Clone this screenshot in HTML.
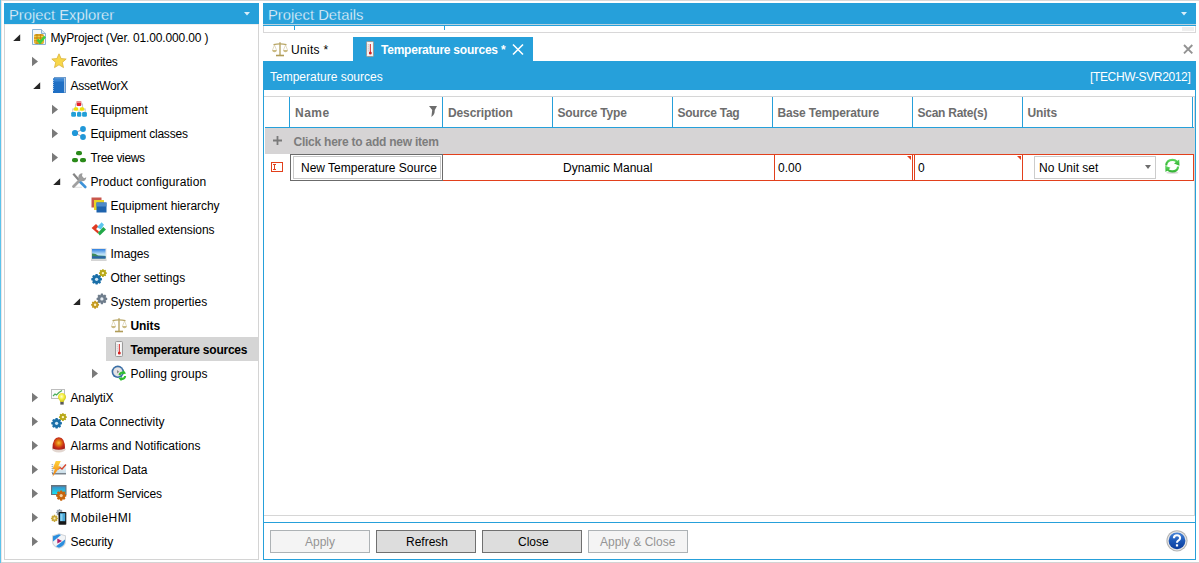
<!DOCTYPE html>
<html><head><meta charset="utf-8">
<style>
*{margin:0;padding:0;box-sizing:border-box}
html,body{width:1199px;height:563px;overflow:hidden;background:#fff}
body{position:relative;font-family:"Liberation Sans",sans-serif;font-size:12px;color:#000}
.a{position:absolute}
.t{position:absolute;white-space:nowrap;line-height:14px;height:14px}
.b{font-weight:bold}
.blue{background:#26a0da}
.hl{position:absolute;height:1px}
.vl{position:absolute;width:1px}
svg{position:absolute;overflow:visible}
</style></head><body>
<!-- outer frame -->
<div class="hl" style="left:1px;top:0;width:1198px;background:#d9d9d9"></div>
<div class="vl" style="left:0;top:0;height:563px;background:#5bc3ec"></div>
<div class="vl" style="left:1px;top:1px;height:562px;background:#ece6e6"></div>
<div class="hl" style="left:1px;top:562px;width:1198px;background:#d4d4d4"></div>

<!-- LEFT PANEL -->
<div class="a blue" style="left:4px;top:3px;width:255px;height:21px"></div>
<div class="t" style="left:9px;top:6.5px;font-size:14.8px;line-height:17px;height:17px;color:#fff;-webkit-text-stroke:0.35px #26a0da">Project Explorer</div>
<svg style="left:0;top:0" width="1" height="1"><path d="M244 12 L250 12 L247 15.5 Z" fill="#d8eef9"/></svg>
<div class="hl" style="left:4px;top:24px;width:255px;background:#efefef"></div>
<div class="vl" style="left:4px;top:24px;height:536px;background:#d4d4d4"></div>
<div class="vl" style="left:258px;top:24px;height:536px;background:#d4d4d4"></div>
<div class="hl" style="left:4px;top:559px;width:255px;background:#d4d4d4"></div>

<!-- selected row -->
<div class="a" style="left:106px;top:337px;width:152px;height:24px;background:#d5d5d5"></div>

<div id="tree"><svg style="left:0;top:0" width="1" height="1"><path d="M20.2 34.3 L20.2 41 L13.2 41 Z" fill="#262626"/></svg>
<svg style="left:31px;top:29px" width="16" height="16" viewBox="0 0 16 16"><path d="M1.5 0.5 H10.5 L14.5 4.5 V15.5 H1.5 Z" fill="#f3f7fb" stroke="#8db4d4"/><path d="M10.5 0.5 V4.5 H14.5" fill="#dce9f4" stroke="#8db4d4"/>
<rect x="3" y="5" width="10" height="10" rx="2" fill="#d9a01e"/><path d="M3 7.5 H13 M3 10.5 H13 M3 13 H13" stroke="#f2c84b" stroke-width="1"/><path d="M6 5 V15 M9.5 5 V15" stroke="#b9800f" stroke-width="0.8"/>
<path d="M6.5 10.5 L9 13.5 L14 7.5" fill="none" stroke="#3fcf3f" stroke-width="2.6"/></svg>
<div class="t" style="left:50.5px;top:31px;letter-spacing:-0.138px">MyProject (Ver. 01.00.000.00 )</div>
<svg style="left:0;top:0" width="1" height="1"><path d="M32 56.8 L38 61.5 L32 66.2 Z" fill="#7a7a7a"/></svg>
<svg style="left:51px;top:53px" width="16" height="16" viewBox="0 0 16 16"><path d="M8 0.8 L10.1 5.6 L15.2 6 L11.3 9.4 L12.5 14.6 L8 11.8 L3.5 14.6 L4.7 9.4 L0.8 6 L5.9 5.6 Z" fill="#f8d74a" stroke="#d9b23a" stroke-width="0.8"/></svg>
<div class="t" style="left:70.5px;top:55px;letter-spacing:-0.250px">Favorites</div>
<svg style="left:0;top:0" width="1" height="1"><path d="M40.2 82.3 L40.2 89 L33.2 89 Z" fill="#262626"/></svg>
<svg style="left:51px;top:77px" width="16" height="16" viewBox="0 0 16 16"><rect x="3.5" y="0.5" width="11" height="15" fill="#a9c7e6" stroke="#6d9bcc"/><rect x="2" y="1.5" width="11" height="14.5" fill="#1f6fc4"/><rect x="2" y="1.5" width="11" height="3" fill="#3a86d4"/><path d="M2 3 V15" stroke="#e8eef5" stroke-width="1.2" stroke-dasharray="1 1"/></svg>
<div class="t" style="left:70.5px;top:79px;letter-spacing:-0.250px">AssetWorX</div>
<svg style="left:0;top:0" width="1" height="1"><path d="M52 104.8 L58 109.5 L52 114.2 Z" fill="#7a7a7a"/></svg>
<svg style="left:71px;top:101px" width="16" height="16" viewBox="0 0 16 16"><path d="M6 3 H4.5 V8 M10 3 H11.5 V8 M3 8 H1.8 V13 M13 8 H14.2 V13 M8 9 V12" stroke="#c8c8c8" stroke-width="1.1" fill="none"/><rect x="5.7" y="0" width="4.5" height="5" rx="0.8" fill="#e8202a"/><rect x="5.7" y="0" width="4.5" height="2" fill="#e88a8a"/><rect x="2.7" y="6.2" width="4.6" height="3.6" rx="1.5" fill="#ece010"/><rect x="8.7" y="6.2" width="4.6" height="3.6" rx="1.5" fill="#ece010"/><rect x="0.2" y="11" width="4.8" height="4.8" rx="1.3" fill="#21a0d8"/><rect x="6" y="11" width="4.3" height="4.8" rx="1.3" fill="#21a0d8"/><rect x="11.1" y="11" width="4.8" height="4.8" rx="1.3" fill="#21a0d8"/></svg>
<div class="t" style="left:90.5px;top:103px">Equipment</div>
<svg style="left:0;top:0" width="1" height="1"><path d="M52 128.8 L58 133.5 L52 138.2 Z" fill="#7a7a7a"/></svg>
<svg style="left:71px;top:125px" width="16" height="16" viewBox="0 0 16 16"><path d="M4 8 L12 4 M4 8 L12 12" stroke="#c9a0a0" stroke-width="1"/><circle cx="4" cy="8" r="3.1" fill="#2097d8"/><circle cx="12" cy="4" r="2.9" fill="#2097d8"/><circle cx="12" cy="12" r="2.9" fill="#2097d8"/></svg>
<div class="t" style="left:90.5px;top:127px;letter-spacing:-0.206px">Equipment classes</div>
<svg style="left:0;top:0" width="1" height="1"><path d="M52 152.8 L58 157.5 L52 162.2 Z" fill="#7a7a7a"/></svg>
<svg style="left:71px;top:149px" width="16" height="16" viewBox="0 0 16 16"><rect x="5" y="2" width="6" height="4.2" rx="2" fill="#2a8a1a"/><rect x="1" y="9" width="6" height="4.2" rx="2" fill="#2a8a1a"/><rect x="9" y="9" width="6" height="4.2" rx="2" fill="#2a8a1a"/></svg>
<div class="t" style="left:90.5px;top:151px;letter-spacing:-0.333px">Tree views</div>
<svg style="left:0;top:0" width="1" height="1"><path d="M60.2 178.3 L60.2 185 L53.2 185 Z" fill="#262626"/></svg>
<svg style="left:71px;top:173px" width="16" height="16" viewBox="0 0 16 16"><path d="M2 14.3 H11" stroke="#e0e0e0" stroke-width="1"/><path d="M2.3 0.8 L8.5 7.8" stroke="#858585" stroke-width="2.2"/><path d="M8.3 8 L14.3 14" stroke="#3c92d8" stroke-width="2.6" stroke-linecap="round"/><path d="M11.5 0.3 A4 4 0 1 0 15.3 4.3 L13 5.2 L11 3 Z" fill="#9c9c9c"/><path d="M10.5 5.5 L2.5 13.5" stroke="#a0a0a0" stroke-width="2.8" stroke-linecap="round"/></svg>
<div class="t" style="left:90.5px;top:175px;letter-spacing:0.110px">Product configuration</div>
<svg style="left:91px;top:197px" width="16" height="16" viewBox="0 0 16 16"><rect x="0.5" y="0.5" width="10" height="10" fill="#c9574c"/><rect x="3" y="3" width="10" height="10" fill="#e8d326"/><rect x="5.5" y="5.5" width="10" height="10" fill="#1e63ad"/><rect x="5.5" y="5.5" width="10" height="4" fill="#4e8ac8"/></svg>
<div class="t" style="left:110.5px;top:199px;letter-spacing:-0.056px">Equipment hierarchy</div>
<svg style="left:91px;top:221px" width="16" height="16" viewBox="0 0 16 16"><path d="M0.6 7 L5 3 L7.5 5.5 L5 8 L8 10.5 L6.8 12.5 Z" fill="#e03a22"/><path d="M6 6.2 L10.6 1.2 L13 3.8 L10 8.5 Z" fill="#5cc6ee"/><path d="M6.8 12 L12.3 6 L15 8.5 L8.8 14.5 Z" fill="#22a848"/></svg>
<div class="t" style="left:110.5px;top:223px;letter-spacing:-0.074px">Installed extensions</div>
<svg style="left:91px;top:245px" width="16" height="16" viewBox="0 0 16 16"><defs><linearGradient id="sky" x1="0" y1="0" x2="0" y2="1"><stop offset="0" stop-color="#2c7ee0"/><stop offset="0.55" stop-color="#bfe2f6"/><stop offset="1" stop-color="#8cc8e8"/></linearGradient></defs><rect x="0" y="3" width="15.5" height="12.8" fill="#e4e4e4"/><rect x="0" y="14.5" width="15.5" height="1.3" fill="#cfcfcf"/><rect x="1" y="4" width="13.5" height="9.5" fill="url(#sky)"/><path d="M1 8.5 Q4 8 7 10.5 L14.5 11 V13.5 H1 Z" fill="#3e8a5a"/><rect x="1" y="11.3" width="13.5" height="2.2" fill="#2a64a8"/></svg>
<div class="t" style="left:110.5px;top:247px;letter-spacing:-0.100px">Images</div>
<svg style="left:91px;top:269px" width="16" height="16" viewBox="0 0 16 16"><polygon points="9.29,8.77 10.92,9.37 10.92,11.23 9.29,11.83 9.29,11.83 10.02,13.41 8.71,14.72 7.13,13.99 7.13,13.99 6.53,15.62 4.67,15.62 4.07,13.99 4.07,13.99 2.49,14.72 1.18,13.41 1.91,11.83 1.91,11.83 0.28,11.23 0.28,9.37 1.91,8.77 1.91,8.77 1.18,7.19 2.49,5.88 4.07,6.61 4.07,6.61 4.67,4.98 6.53,4.98 7.13,6.61 7.13,6.61 8.71,5.88 10.02,7.19 9.29,8.77" fill="#1a6fa8"/><circle cx="5.6" cy="10.3" r="1.62" fill="#cfe6f5"/><polygon points="14.63,2.97 15.84,3.41 15.84,4.79 14.63,5.23 14.63,5.23 15.17,6.40 14.20,7.37 13.03,6.83 13.03,6.83 12.59,8.04 11.21,8.04 10.77,6.83 10.77,6.83 9.60,7.37 8.63,6.40 9.17,5.23 9.17,5.23 7.96,4.79 7.96,3.41 9.17,2.97 9.17,2.97 8.63,1.80 9.60,0.83 10.77,1.37 10.77,1.37 11.21,0.16 12.59,0.16 13.03,1.37 13.03,1.37 14.20,0.83 15.17,1.80 14.63,2.97" fill="#b8a818"/><circle cx="11.9" cy="4.1" r="1.20" fill="#fff6c0"/></svg>
<div class="t" style="left:110.5px;top:271px">Other settings</div>
<svg style="left:0;top:0" width="1" height="1"><path d="M80.2 298.3 L80.2 305 L73.2 305 Z" fill="#262626"/></svg>
<svg style="left:91px;top:293px" width="16" height="16" viewBox="0 0 16 16"><polygon points="14.59,4.37 16.22,4.97 16.22,6.83 14.59,7.43 14.59,7.43 15.32,9.01 14.01,10.32 12.43,9.59 12.43,9.59 11.83,11.22 9.97,11.22 9.37,9.59 9.37,9.59 7.79,10.32 6.48,9.01 7.21,7.43 7.21,7.43 5.58,6.83 5.58,4.97 7.21,4.37 7.21,4.37 6.48,2.79 7.79,1.48 9.37,2.21 9.37,2.21 9.97,0.58 11.83,0.58 12.43,2.21 12.43,2.21 14.01,1.48 15.32,2.79 14.59,4.37" fill="#6f7d8c"/><circle cx="10.9" cy="5.9" r="1.62" fill="#e8eef4"/><polygon points="6.83,10.67 8.04,11.11 8.04,12.49 6.83,12.93 6.83,12.93 7.37,14.10 6.40,15.07 5.23,14.53 5.23,14.53 4.79,15.74 3.41,15.74 2.97,14.53 2.97,14.53 1.80,15.07 0.83,14.10 1.37,12.93 1.37,12.93 0.16,12.49 0.16,11.11 1.37,10.67 1.37,10.67 0.83,9.50 1.80,8.53 2.97,9.07 2.97,9.07 3.41,7.86 4.79,7.86 5.23,9.07 5.23,9.07 6.40,8.53 7.37,9.50 6.83,10.67" fill="#c49a20"/><circle cx="4.1" cy="11.8" r="1.20" fill="#fff3c8"/></svg>
<div class="t" style="left:110.5px;top:295px">System properties</div>
<svg style="left:111px;top:317px" width="16" height="16" viewBox="0 0 16 16"><path d="M8 1.2 V14" stroke="#b8a666" stroke-width="1.4"/><path d="M1.5 3.6 Q8 2.2 14.5 3.6" stroke="#b8a666" stroke-width="1.1" fill="none"/><path d="M4 14.5 H12" stroke="#b09c58" stroke-width="1.6"/><path d="M2.5 4 L0.5 9 M2.5 4 L4.5 9 M13.5 4 L11.5 9 M13.5 4 L15.5 9" stroke="#d0c49a" stroke-width="0.6"/><path d="M0 9 H5 Q4.5 11.3 2.5 11.3 Q0.5 11.3 0 9 Z M11 9 H16 Q15.5 11.3 13.5 11.3 Q11.5 11.3 11 9 Z" fill="#cbbb84"/></svg>
<div class="t b" style="left:130.5px;top:319px;letter-spacing:-0.100px">Units</div>
<svg style="left:111px;top:341px" width="16" height="16" viewBox="0 0 16 16"><rect x="4.5" y="0.5" width="7" height="15" rx="1" fill="#ececec" stroke="#9a9a9a"/><rect x="5.5" y="1.5" width="5" height="13" fill="#fafafa"/><path d="M8.3 3 V11.5" stroke="#d42020" stroke-width="1"/><circle cx="8.3" cy="12" r="1.5" fill="#d42020"/><path d="M6.3 3.5 V4.3 M6.3 5.5 V6.3 M6.3 7.5 V8.3 M6.3 9.5 V10.3" stroke="#888" stroke-width="0.8"/></svg>
<div class="t b" style="left:130.5px;top:343px;letter-spacing:-0.233px">Temperature sources</div>
<svg style="left:0;top:0" width="1" height="1"><path d="M92 368.8 L98 373.5 L92 378.2 Z" fill="#7a7a7a"/></svg>
<svg style="left:111px;top:365px" width="16" height="16" viewBox="0 0 16 16"><circle cx="6.8" cy="6.8" r="6.2" fill="#3a6fa6"/><circle cx="6.8" cy="6.8" r="4.6" fill="#e4e2e4"/><path d="M6 5 L8.3 6.8 L6 8.6 Z" fill="#8a8a8a"/><path d="M7.5 10 Q8 6.5 12 6.5 L12.5 5 L15 8.5 L11 9.5 L11.6 8.6 Q9.8 8.8 9.5 10.5 Z M15.2 11 Q14.8 15 10.6 15.2 L10 16 L7.5 13 L11.5 12 L10.8 13 Q12.8 13 13.2 11 Z" fill="#2fbe2f"/></svg>
<div class="t" style="left:130.5px;top:367px;letter-spacing:0.077px">Polling groups</div>
<svg style="left:0;top:0" width="1" height="1"><path d="M32 392.8 L38 397.5 L32 402.2 Z" fill="#7a7a7a"/></svg>
<svg style="left:51px;top:389px" width="16" height="16" viewBox="0 0 16 16"><rect x="0.5" y="0.5" width="13" height="9" fill="#fbfbfb" stroke="#bdbdbd" stroke-width="1"/><path d="M2 7 L4 5 L5.5 6 L8 3.5 L11 1.5" stroke="#4caf5a" stroke-width="1.2" fill="none"/><defs><radialGradient id="bulb" cx="0.45" cy="0.4" r="0.6"><stop offset="0" stop-color="#fffdd0"/><stop offset="0.5" stop-color="#f4ee3a"/><stop offset="1" stop-color="#c8c020"/></radialGradient></defs><path d="M11 4 A4 4 0 0 1 14.5 10 Q13 11.5 12.8 13 H9.2 Q9 11.5 7.5 10 A4 4 0 0 1 11 4 Z" fill="url(#bulb)"/><rect x="9.3" y="13" width="3.4" height="2.6" fill="#5a5a5a"/></svg>
<div class="t" style="left:70.5px;top:391px;letter-spacing:-0.143px">AnalytiX</div>
<svg style="left:0;top:0" width="1" height="1"><path d="M32 416.8 L38 421.5 L32 426.2 Z" fill="#7a7a7a"/></svg>
<svg style="left:51px;top:413px" width="16" height="16" viewBox="0 0 16 16"><polygon points="9.29,8.77 10.92,9.37 10.92,11.23 9.29,11.83 9.29,11.83 10.02,13.41 8.71,14.72 7.13,13.99 7.13,13.99 6.53,15.62 4.67,15.62 4.07,13.99 4.07,13.99 2.49,14.72 1.18,13.41 1.91,11.83 1.91,11.83 0.28,11.23 0.28,9.37 1.91,8.77 1.91,8.77 1.18,7.19 2.49,5.88 4.07,6.61 4.07,6.61 4.67,4.98 6.53,4.98 7.13,6.61 7.13,6.61 8.71,5.88 10.02,7.19 9.29,8.77" fill="#1a6fa8"/><circle cx="5.6" cy="10.3" r="1.62" fill="#cfe6f5"/><polygon points="14.63,2.97 15.84,3.41 15.84,4.79 14.63,5.23 14.63,5.23 15.17,6.40 14.20,7.37 13.03,6.83 13.03,6.83 12.59,8.04 11.21,8.04 10.77,6.83 10.77,6.83 9.60,7.37 8.63,6.40 9.17,5.23 9.17,5.23 7.96,4.79 7.96,3.41 9.17,2.97 9.17,2.97 8.63,1.80 9.60,0.83 10.77,1.37 10.77,1.37 11.21,0.16 12.59,0.16 13.03,1.37 13.03,1.37 14.20,0.83 15.17,1.80 14.63,2.97" fill="#b8a818"/><circle cx="11.9" cy="4.1" r="1.20" fill="#fff6c0"/></svg>
<div class="t" style="left:70.5px;top:415px">Data Connectivity</div>
<svg style="left:0;top:0" width="1" height="1"><path d="M32 440.8 L38 445.5 L32 450.2 Z" fill="#7a7a7a"/></svg>
<svg style="left:51px;top:437px" width="16" height="16" viewBox="0 0 16 16"><defs><radialGradient id="alg" cx="0.5" cy="0.45" r="0.55"><stop offset="0" stop-color="#f6c040"/><stop offset="0.35" stop-color="#e07a10"/><stop offset="0.75" stop-color="#c42a1a"/><stop offset="1" stop-color="#a8201a"/></radialGradient></defs><ellipse cx="7.8" cy="12.3" rx="6.7" ry="3.2" fill="#e2d6d0"/><path d="M1.5 11.5 Q1.5 0.5 7.8 0.3 Q14 0.5 14 11.5 Q7.8 14 1.5 11.5 Z" fill="url(#alg)"/></svg>
<div class="t" style="left:70.5px;top:439px;letter-spacing:0.026px">Alarms and Notifications</div>
<svg style="left:0;top:0" width="1" height="1"><path d="M32 464.8 L38 469.5 L32 474.2 Z" fill="#7a7a7a"/></svg>
<svg style="left:51px;top:461px" width="16" height="16" viewBox="0 0 16 16"><defs><linearGradient id="hbg" x1="0" y1="0" x2="0" y2="1"><stop offset="0" stop-color="#f2f7fa"/><stop offset="1" stop-color="#c8dde8"/></linearGradient><linearGradient id="bolt" x1="0" y1="0" x2="0" y2="1"><stop offset="0" stop-color="#ffd23a"/><stop offset="1" stop-color="#f07a10"/></linearGradient></defs><rect x="1" y="3" width="14" height="9.5" fill="url(#hbg)"/><path d="M1 12.8 H15" stroke="#5f6a74" stroke-width="1.2"/><path d="M1.2 3 V12" stroke="#6a7aa0" stroke-width="0.8" stroke-dasharray="1 1"/><path d="M6.5 8.5 L9 6.5 L11 8 L15 3.5" stroke="#d8452a" stroke-width="1.3" fill="none"/><path d="M4.8 0 H9.8 L7.3 5.2 H9.6 L1.5 15.8 L3.8 8 H1.6 Z" fill="url(#bolt)"/></svg>
<div class="t" style="left:70.5px;top:463px;letter-spacing:-0.071px">Historical Data</div>
<svg style="left:0;top:0" width="1" height="1"><path d="M32 488.8 L38 493.5 L32 498.2 Z" fill="#7a7a7a"/></svg>
<svg style="left:51px;top:485px" width="16" height="16" viewBox="0 0 16 16"><defs><linearGradient id="scr" x1="0" y1="0" x2="0" y2="1"><stop offset="0" stop-color="#3a90c8"/><stop offset="1" stop-color="#18e0f4"/></linearGradient></defs><rect x="0" y="0" width="15.5" height="10" fill="#68737c"/><rect x="1.2" y="1.5" width="13.2" height="7.5" fill="url(#scr)"/><polygon points="13.76,9.13 15.32,9.71 15.32,11.49 13.76,12.07 13.76,12.07 14.45,13.59 13.19,14.85 11.67,14.16 11.67,14.16 11.09,15.72 9.31,15.72 8.73,14.16 8.73,14.16 7.21,14.85 5.95,13.59 6.64,12.07 6.64,12.07 5.08,11.49 5.08,9.71 6.64,9.13 6.64,9.13 5.95,7.61 7.21,6.35 8.73,7.04 8.73,7.04 9.31,5.48 11.09,5.48 11.67,7.04 11.67,7.04 13.19,6.35 14.45,7.61 13.76,9.13" fill="#c8650c"/><circle cx="10.2" cy="10.6" r="1.56" fill="#f4d0a0"/></svg>
<div class="t" style="left:70.5px;top:487px;letter-spacing:-0.162px">Platform Services</div>
<svg style="left:0;top:0" width="1" height="1"><path d="M32 512.8 L38 517.5 L32 522.2 Z" fill="#7a7a7a"/></svg>
<svg style="left:51px;top:509px" width="16" height="16" viewBox="0 0 16 16"><polygon points="10.89,2.51 11.95,2.90 11.95,4.10 10.89,4.49 10.89,4.49 11.36,5.51 10.51,6.36 9.49,5.89 9.49,5.89 9.10,6.95 7.90,6.95 7.51,5.89 7.51,5.89 6.49,6.36 5.64,5.51 6.11,4.49 6.11,4.49 5.05,4.10 5.05,2.90 6.11,2.51 6.11,2.51 5.64,1.49 6.49,0.64 7.51,1.11 7.51,1.11 7.90,0.05 9.10,0.05 9.49,1.11 9.49,1.11 10.51,0.64 11.36,1.49 10.89,2.51" fill="#9aa6b2"/><circle cx="8.5" cy="3.5" r="1.05" fill="#e0e6ec"/><polygon points="5.96,8.38 7.05,8.78 7.05,10.02 5.96,10.42 5.96,10.42 6.45,11.47 5.57,12.35 4.52,11.86 4.52,11.86 4.12,12.95 2.88,12.95 2.48,11.86 2.48,11.86 1.43,12.35 0.55,11.47 1.04,10.42 1.04,10.42 -0.05,10.02 -0.05,8.78 1.04,8.38 1.04,8.38 0.55,7.33 1.43,6.45 2.48,6.94 2.48,6.94 2.88,5.85 4.12,5.85 4.52,6.94 4.52,6.94 5.57,6.45 6.45,7.33 5.96,8.38" fill="#c8a83a"/><circle cx="3.5" cy="9.4" r="1.08" fill="#fff0c0"/><rect x="7.5" y="3" width="7.8" height="12.8" rx="0.8" fill="#181818"/><rect x="9" y="4.2" width="5.2" height="8" fill="#4aa8d8"/><rect x="9.5" y="5" width="2" height="7" fill="#8ad0ee"/></svg>
<div class="t" style="left:70.5px;top:511px;letter-spacing:0.450px">MobileHMI</div>
<svg style="left:0;top:0" width="1" height="1"><path d="M32 536.8 L38 541.5 L32 546.2 Z" fill="#7a7a7a"/></svg>
<svg style="left:51px;top:533px" width="16" height="16" viewBox="0 0 16 16"><path d="M8 0.3 L15 2.5 V8 Q15 13.5 8 15.8 Q1 13.5 1 8 V2.5 Z" fill="#d0d4d8"/><path d="M8 1.3 L14 3.2 V8 Q14 12.7 8 14.8 Q2 12.7 2 8 V3.2 Z" fill="#f2f4f6"/><path d="M2 3.2 L8 1.3 L10 1.9 L2 8.5 Z" fill="#2a8ede"/><path d="M14 6.5 V8 Q14 12.7 8 14.8 Q6 14.1 5 13.3 Z" fill="#2a8ede"/><path d="M6.3 5.5 L11 8 L6.3 10.5 Z" fill="#b0206a"/></svg>
<div class="t" style="left:70.5px;top:535px;letter-spacing:-0.086px">Security</div></div><!--/tree-->

<!-- RIGHT PANEL -->
<div class="a blue" style="left:263px;top:3px;width:933px;height:21px"></div>
<div class="t" style="left:268px;top:6.5px;font-size:14.8px;line-height:17px;height:17px;color:#fff;-webkit-text-stroke:0.35px #26a0da">Project Details</div>
<svg style="left:0;top:0" width="1" height="1"><path d="M1181 12 L1187 12 L1184 15.5 Z" fill="#d8eef9"/></svg>
<div class="hl" style="left:263px;top:24px;width:933px;background:#b9d3e0"></div>
<div class="hl" style="left:263px;top:25px;width:933px;background:#26a0da"></div>
<div class="vl" style="left:263px;top:26px;height:7px;background:#d8d7d8"></div>
<div class="vl" style="left:1195px;top:26px;height:7px;background:#d8d7d8"></div>
<div class="hl" style="left:263px;top:32px;width:933px;background:#d8d7d8"></div>
<div class="vl" style="left:294px;top:26px;height:4px;background:#26a0da"></div>
<div class="vl" style="left:444px;top:26px;height:4px;background:#26a0da"></div>
<div class="a" style="left:1182px;top:27px;width:12px;height:4px;background:#eeeeee"></div>

<!-- tabs -->
<svg style="left:272px;top:41px" width="16" height="16" viewBox="0 0 16 16"><path d="M8 1.2 V14" stroke="#b8a666" stroke-width="1.4"/><path d="M1.5 3.6 Q8 2.2 14.5 3.6" stroke="#b8a666" stroke-width="1.1" fill="none"/><path d="M4 14.5 H12" stroke="#b09c58" stroke-width="1.6"/><path d="M2.5 4 L0.5 9 M2.5 4 L4.5 9 M13.5 4 L11.5 9 M13.5 4 L15.5 9" stroke="#d0c49a" stroke-width="0.6"/><path d="M0 9 H5 Q4.5 11.3 2.5 11.3 Q0.5 11.3 0 9 Z M11 9 H16 Q15.5 11.3 13.5 11.3 Q11.5 11.3 11 9 Z" fill="#cbbb84"/></svg>


<div class="t" style="left:291px;top:43px;color:#000;letter-spacing:0.3px">Units *</div>
<div class="a blue" style="left:353px;top:37px;width:180px;height:24px"></div>
<svg style="left:362px;top:41px" width="16" height="16" viewBox="0 0 16 16"><rect x="4.5" y="0.5" width="7" height="15" rx="1" fill="#ececec" stroke="#9a9a9a"/><rect x="5.5" y="1.5" width="5" height="13" fill="#fafafa"/><path d="M8.3 3 V11.5" stroke="#d42020" stroke-width="1"/><circle cx="8.3" cy="12" r="1.5" fill="#d42020"/><path d="M6.3 3.5 V4.3 M6.3 5.5 V6.3 M6.3 7.5 V8.3 M6.3 9.5 V10.3" stroke="#888" stroke-width="0.8"/></svg>
<div class="t b" style="left:381px;top:43px;color:#fff;letter-spacing:-0.23px">Temperature sources *</div>
<svg style="left:0;top:0" width="1" height="1"><path d="M513 44.5 L523 54.5 M523 44.5 L513 54.5" stroke="#fff" stroke-width="1.6"/></svg>
<svg style="left:0;top:0" width="1" height="1"><path d="M1184 45 L1192.3 53.3 M1192.3 45 L1184 53.3" stroke="#929292" stroke-width="1.9"/></svg>

<!-- content header -->
<div class="a blue" style="left:263px;top:61px;width:933px;height:29px"></div>
<div class="t" style="left:270px;top:70px;color:#fff">Temperature sources</div>
<div class="t" style="left:1090px;top:70px;color:#fff;letter-spacing:-0.36px">[TECHW-SVR2012]</div>
<div class="vl" style="left:263px;top:61px;height:499px;background:#26a0da"></div>
<div class="vl" style="left:1195px;top:61px;height:499px;background:#26a0da"></div>
<div class="hl" style="left:263px;top:559px;width:933px;background:#26a0da"></div>

<!-- grid frame -->
<div class="hl" style="left:264px;top:96px;width:931px;background:#d6d6d6"></div>
<div class="vl" style="left:1194px;top:96px;height:420px;background:#d6d6d6"></div>
<div class="hl" style="left:264px;top:515px;width:931px;background:#d6d6d6"></div>
<div class="hl" style="left:265px;top:127px;width:929px;background:#26a0da"></div>
<div class="vl" style="left:289px;top:97px;height:30px;background:#26a0da"></div>
<div class="vl" style="left:442px;top:97px;height:30px;background:#26a0da"></div>
<div class="vl" style="left:552px;top:97px;height:30px;background:#26a0da"></div>
<div class="vl" style="left:672px;top:97px;height:30px;background:#26a0da"></div>
<div class="vl" style="left:772px;top:97px;height:30px;background:#26a0da"></div>
<div class="vl" style="left:912px;top:97px;height:30px;background:#26a0da"></div>
<div class="vl" style="left:1022px;top:97px;height:30px;background:#26a0da"></div>
<div class="vl" style="left:1192px;top:97px;height:30px;background:#26a0da"></div>
<div class="t b" style="left:295px;top:106px;color:#6d6d6d;letter-spacing:0.5px">Name</div>
<div class="t b" style="left:448px;top:106px;color:#6d6d6d;letter-spacing:-0.12px">Description</div>
<div class="t b" style="left:557.5px;top:106px;color:#6d6d6d;letter-spacing:-0.17px">Source Type</div>
<div class="t b" style="left:677.5px;top:106px;color:#6d6d6d;letter-spacing:-0.26px">Source Tag</div>
<div class="t b" style="left:777.5px;top:106px;color:#6d6d6d;letter-spacing:-0.15px">Base Temperature</div>
<div class="t b" style="left:917.5px;top:106px;color:#6d6d6d;letter-spacing:-0.25px">Scan Rate(s)</div>
<div class="t b" style="left:1027.5px;top:106px;color:#6d6d6d;letter-spacing:-0.1px">Units</div>
<svg style="left:0;top:0" width="1" height="1"><path d="M429 106 L437 106 L434.8 110 L434.5 113 Q433.8 115.5 431.4 117 L432.2 110 Z" fill="#6d6d6d"/></svg>

<!-- add new row -->
<div class="a" style="left:265px;top:128px;width:929px;height:26px;background:#d6d4d5"></div>
<svg style="left:0;top:0" width="1" height="1"><path d="M273 140.5 L282 140.5 M277.5 136 L277.5 145" stroke="#7a7a7a" stroke-width="1.8"/></svg>
<div class="t b" style="left:293.5px;top:135px;color:#7d7d7d;letter-spacing:-0.24px">Click here to add new item</div>

<!-- data row -->
<div class="hl" style="left:442px;top:154px;width:752px;background:#e2401c"></div>
<div class="hl" style="left:442px;top:180px;width:752px;background:#e2401c"></div>
<div class="vl" style="left:1193px;top:154px;height:27px;background:#e2401c"></div>
<div class="vl" style="left:774px;top:154px;height:27px;background:#e2401c"></div>
<div class="vl" style="left:912px;top:154px;height:27px;background:#e2401c"></div>
<div class="vl" style="left:914px;top:154px;height:27px;background:#e2401c"></div>
<div class="vl" style="left:1022px;top:154px;height:27px;background:#e2401c"></div>
<svg style="left:0;top:0" width="1" height="1"><path d="M907 156 L911 156 L911 160 Z M1017 156 L1021 156 L1021 160 Z" fill="#e2401c"/></svg>
<div class="a" style="left:271px;top:162px;width:12px;height:10px;border:1px solid #e2401c"></div>
<svg style="left:0;top:0" width="1" height="1"><path d="M273 164.5 L276 164.5 M274.5 164.5 L274.5 169.5 M273 169.5 L276 169.5" stroke="#e2401c" stroke-width="1"/></svg>
<div class="a" style="left:290px;top:154px;width:153px;height:27px;border:1px solid #6b6b6b"></div>
<div class="a" style="left:293px;top:156px;width:148px;height:23px;border:1px solid #c9c9c9"></div>
<div class="t" style="left:301px;top:161px">New Temperature Source</div>
<div class="t" style="left:563px;top:161px">Dynamic Manual</div>
<div class="t" style="left:778px;top:161px">0.00</div>
<div class="t" style="left:918px;top:161px">0</div>
<div class="a" style="left:1034px;top:156px;width:122px;height:23px;border:1px solid #cccccc"></div>
<div class="t" style="left:1039px;top:161px">No Unit set</div>
<svg style="left:0;top:0" width="1" height="1"><path d="M1145 165 L1151 165 L1148 169 Z" fill="#6d6d6d"/></svg>
<svg style="left:1164px;top:158px" width="16" height="16" viewBox="0 0 16 16"><defs><linearGradient id="gr" x1="0" y1="0" x2="0" y2="1"><stop offset="0" stop-color="#62dc62"/><stop offset="1" stop-color="#2fae2f"/></linearGradient></defs>
<ellipse cx="8.3" cy="14.8" rx="6" ry="1" fill="#d8d8d8"/>
<path d="M3.2 7.5 Q3.5 3 8.5 3 Q10.5 3 11.8 4 L10 5.5 L15.5 7.8 L15.2 1.5 L13.5 2.8 Q11.5 0.8 8.5 0.8 Q1.5 1 1.2 7.5 Z" fill="url(#gr)"/>
<path d="M13 8.5 Q12.8 12.3 8.2 12.3 Q6.2 12.3 4.8 11.3 L6.5 9.8 L1.2 7.8 L1.5 14 L3.2 12.8 Q5.2 14.6 8.2 14.6 Q14.8 14.5 15.2 8.5 Z" fill="url(#gr)"/></svg>

<!-- bottom bar -->
<div class="hl" style="left:263px;top:522px;width:933px;background:#26a0da"></div>
<div class="a" style="left:270px;top:530px;width:100px;height:23px;background:#f4f4f4;border:1px solid #adb2b5"></div>
<div class="t" style="left:305px;top:535px;color:#959595">Apply</div>
<div class="a" style="left:376px;top:530px;width:100px;height:23px;background:#dddddd;border:1px solid #707070"></div>
<div class="t" style="left:406px;top:535px">Refresh</div>
<div class="a" style="left:482px;top:530px;width:100px;height:23px;background:#dddddd;border:1px solid #707070"></div>
<div class="t" style="left:518px;top:535px">Close</div>
<div class="a" style="left:588px;top:530px;width:100px;height:23px;background:#f4f4f4;border:1px solid #adb2b5"></div>
<div class="t" style="left:600px;top:535px;color:#959595">Apply &amp; Close</div>
<svg style="left:1166px;top:530px" width="22" height="22" viewBox="0 0 22 22"><defs><linearGradient id="hg" x1="0" y1="0" x2="0" y2="1"><stop offset="0" stop-color="#4a86d8"/><stop offset="0.5" stop-color="#1c58b8"/><stop offset="1" stop-color="#0a3c9c"/></linearGradient></defs>
<circle cx="11" cy="10.8" r="10.6" fill="#b4b4b4"/><circle cx="11" cy="10.8" r="9.6" fill="#e6e6e6"/><circle cx="11" cy="10.8" r="8.4" fill="url(#hg)"/>
<path d="M7.9 8.3 Q7.9 5.3 11 5.3 Q14.1 5.3 14.1 8 Q14.1 9.6 12.2 10.6 Q11 11.2 11 12.8" fill="none" stroke="#fff" stroke-width="2.1"/><rect x="9.9" y="14.3" width="2.2" height="2.2" fill="#fff"/></svg>
</body></html>
